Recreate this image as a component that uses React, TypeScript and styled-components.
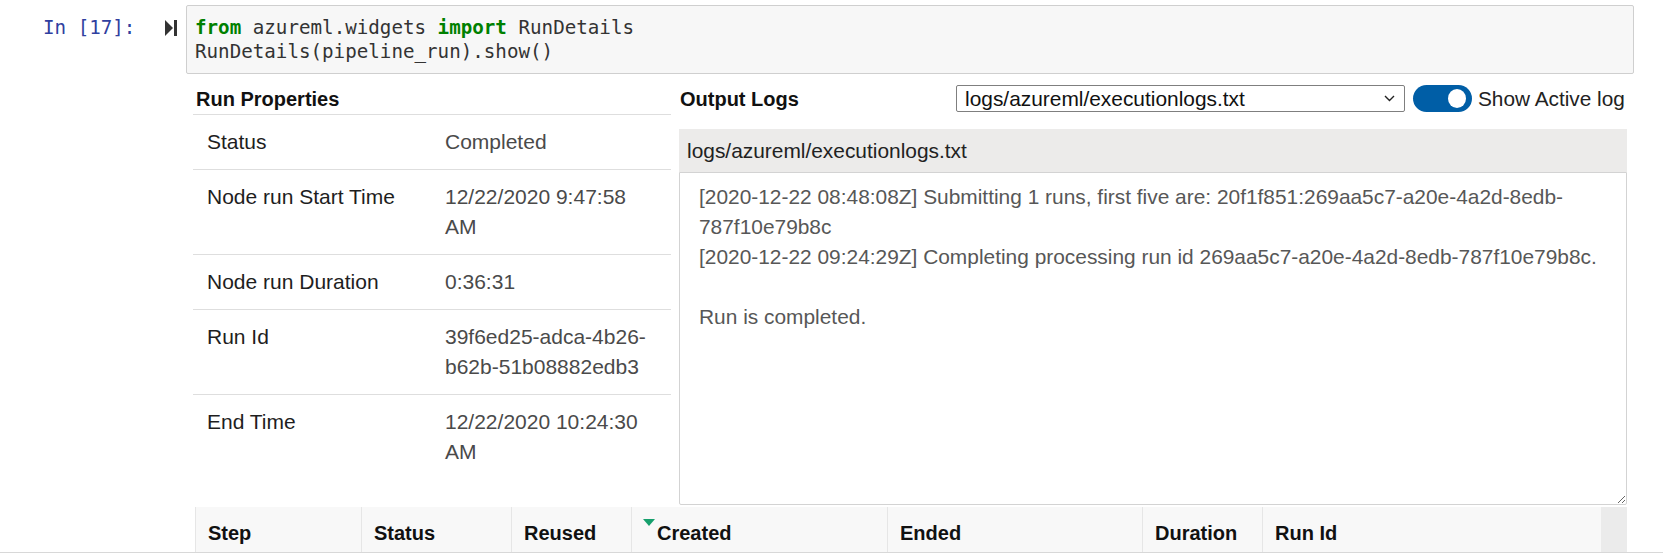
import React from "react";
import styled, { createGlobalStyle } from "styled-components";

const GlobalStyle = createGlobalStyle`
  html, body { margin: 0; padding: 0; background: #ffffff; }
  body { font-family: "Liberation Sans", Arial, sans-serif; }
  * { box-sizing: border-box; }
`;

const MONO = `"DejaVu Sans Mono", "Liberation Mono", monospace`;
const SANS = `"Liberation Sans", Arial, sans-serif`;

const Page = styled.div`
  width: 1663px;
  height: 556px;
  overflow: hidden;
  background: #fff;
`;

const InputRow = styled.div`
  display: flex;
  padding-top: 5px;
`;

const PromptArea = styled.div`
  width: 186px;
  flex: none;
  display: flex;
  align-items: center;
  height: 24px;
  margin-top: 10.5px;
  padding: 0 9px 0 43px;
`;

const PromptText = styled.span`
  font-family: ${MONO};
  font-size: 19.2px;
  line-height: 24px;
  color: #303f9f;
  white-space: pre;
`;

const RunIcon = styled.svg`
  margin-left: auto;
  display: block;
`;

const CodeBox = styled.div`
  width: 1448px;
  flex: none;
  background: #f7f7f7;
  border: 1px solid #cfcfcf;
  border-radius: 2px;
  padding: 9.5px 8px;
  font-family: ${MONO};
  font-size: 19.2px;
  line-height: 24px;
  color: #333;
  white-space: pre;
`;

const Kw = styled.span`
  color: #008000;
  font-weight: bold;
`;

const OutputRow = styled.div`
  display: flex;
`;

const OutputPrompt = styled.div`
  width: 193px;
  flex: none;
`;

const OutputBody = styled.div`
  width: 1434px;
  flex: none;
`;

const Columns = styled.div`
  display: grid;
  grid-template-columns: 478px 948px;
  column-gap: 8px;
`;

const Column = styled.div`
  display: flex;
  flex-direction: column;
`;

const SectionHeader = styled.div<{ $bottom: number }>`
  display: flex;
  align-items: center;
  height: ${(p) => 38 + p.$bottom}px;
  padding: 11px 0 ${(p) => p.$bottom}px;
`;

const Title = styled.div<{ $width?: number; $indent: number }>`
  font-family: ${SANS};
  font-weight: bold;
  font-size: 20px;
  line-height: 24px;
  color: #111;
  padding-left: ${(p) => p.$indent}px;
  flex: ${(p) => (p.$width ? `0 0 ${p.$width}px` : "none")};
`;

const PropsGrid = styled.div`
  display: grid;
  grid-template-columns: 252px 226px;
`;

const PropCell = styled.div<{ $value?: boolean }>`
  border-top: 1px solid #dedede;
  padding: ${(p) => (p.$value ? "12px 18px 12px 0" : "12px 0 12px 14px")};
  font-family: ${SANS};
  font-size: 21px;
  line-height: 30px;
  color: ${(p) => (p.$value ? "#4a4a4a" : "#1e1e1e")};
`;

const SelectBox = styled.div`
  width: 449px;
  height: 27px;
  flex: none;
  display: flex;
  align-items: center;
  justify-content: space-between;
  border: 1px solid #7f7f7f;
  border-radius: 2px;
  background: #fff;
  padding: 0 9px 0 8px;
  font-family: ${SANS};
  font-size: 20.9px;
  color: #111;
`;

const Toggle = styled.div`
  width: 59px;
  height: 27px;
  flex: none;
  margin-left: 8px;
  border-radius: 14px;
  background: #005ea6;
  display: flex;
  align-items: center;
  justify-content: flex-end;
  padding-right: 6px;
`;

const Knob = styled.div`
  width: 18px;
  height: 19px;
  border-radius: 50%;
  background: #fff;
`;

const ToggleLabel = styled.span`
  margin-left: 6px;
  font-family: ${SANS};
  font-size: 20.8px;
  color: #222;
  white-space: nowrap;
`;

const LogHeader = styled.div`
  height: 43px;
  display: flex;
  align-items: center;
  padding-left: 8px;
  background: #ecebea;
  font-family: ${SANS};
  font-size: 20.9px;
  line-height: 24px;
  color: #222;
`;

const LogBody = styled.div`
  height: 333px;
  border: 1px solid #d3d3d3;
  border-radius: 0 0 2px 2px;
  padding: 9px 12px 9px 19px;
  font-family: ${SANS};
  font-size: 20.9px;
  line-height: 30px;
  color: #575757;
  white-space: pre-wrap;
  overflow: auto;
  resize: vertical;
`;

const StepHeader = styled.div`
  display: grid;
  grid-template-columns: 166px 150px 120px 256px 255px 120px 339px 26px;
  height: 45px;
  margin: 2px 0 0 2px;
  background: #f8f8f8;
`;

const HeadCell = styled.div`
  display: flex;
  align-items: flex-start;
  border-left: 1px solid #e6e6e6;
  padding: 14px 0 0 12px;
  font-family: ${SANS};
  font-weight: bold;
  font-size: 20px;
  line-height: 24px;
  color: #111;
  white-space: nowrap;
`;

const SortArrow = styled.span`
  width: 0;
  height: 0;
  margin: -2px 2px 0 -1px;
  border-left: 6.5px solid transparent;
  border-right: 6.5px solid transparent;
  border-top: 7px solid #17a06d;
`;

const Gutter = styled.div`
  background: #ebebeb;
`;

const Divider = styled.div`
  height: 1px;
  background: #d8d8d8;
`;

const props: [string, string][] = [
  ["Status", "Completed"],
  ["Node run Start Time", "12/22/2020 9:47:58 AM"],
  ["Node run Duration", "0:36:31"],
  ["Run Id", "39f6ed25-adca-4b26-b62b-51b08882edb3"],
  ["End Time", "12/22/2020 10:24:30 AM"],
];

const columns = ["Step", "Status", "Reused", "Created", "Ended", "Duration", "Run Id"];

const logText =
  "[2020-12-22 08:48:08Z] Submitting 1 runs, first five are: 20f1f851:269aa5c7-a20e-4a2d-8edb-787f10e79b8c\n" +
  "[2020-12-22 09:24:29Z] Completing processing run id 269aa5c7-a20e-4a2d-8edb-787f10e79b8c.\n\n" +
  "Run is completed.";

export default function App() {
  return (
    <Page>
      <GlobalStyle />
      <InputRow>
        <PromptArea>
          <PromptText>In [17]:</PromptText>
          <RunIcon width="12" height="16" viewBox="0 0 12 16">
            <path d="M0 0 L8 8 L0 16 Z" fill="#333" />
            <rect x="9" y="0" width="3" height="16" fill="#333" />
          </RunIcon>
        </PromptArea>
        <CodeBox>
          <Kw>from</Kw> azureml.widgets <Kw>import</Kw> RunDetails{"\n"}
          RunDetails(pipeline_run).show()
        </CodeBox>
      </InputRow>
      <OutputRow>
        <OutputPrompt />
        <OutputBody>
          <Columns>
            <Column>
              <SectionHeader $bottom={2}>
                <Title $indent={3}>Run Properties</Title>
              </SectionHeader>
              <PropsGrid>
                {props.map(([k, v]) => (
                  <React.Fragment key={k}>
                    <PropCell>{k}</PropCell>
                    <PropCell $value>{v}</PropCell>
                  </React.Fragment>
                ))}
              </PropsGrid>
            </Column>
            <Column>
              <SectionHeader $bottom={17}>
                <Title $indent={1} $width={277}>
                  Output Logs
                </Title>
                <SelectBox>
                  <span>logs/azureml/executionlogs.txt</span>
                  <svg width="11" height="7" viewBox="0 0 11 7">
                    <polyline points="1,1 5.5,5.5 10,1" fill="none" stroke="#222" strokeWidth="1.4" />
                  </svg>
                </SelectBox>
                <Toggle>
                  <Knob />
                </Toggle>
                <ToggleLabel>Show Active log</ToggleLabel>
              </SectionHeader>
              <LogHeader>logs/azureml/executionlogs.txt</LogHeader>
              <LogBody>{logText}</LogBody>
            </Column>
          </Columns>
          <StepHeader>
            {columns.map((c) => (
              <HeadCell key={c}>
                {c === "Created" && <SortArrow />}
                {c}
              </HeadCell>
            ))}
            <Gutter />
          </StepHeader>
        </OutputBody>
      </OutputRow>
      <Divider />
    </Page>
  );
}
